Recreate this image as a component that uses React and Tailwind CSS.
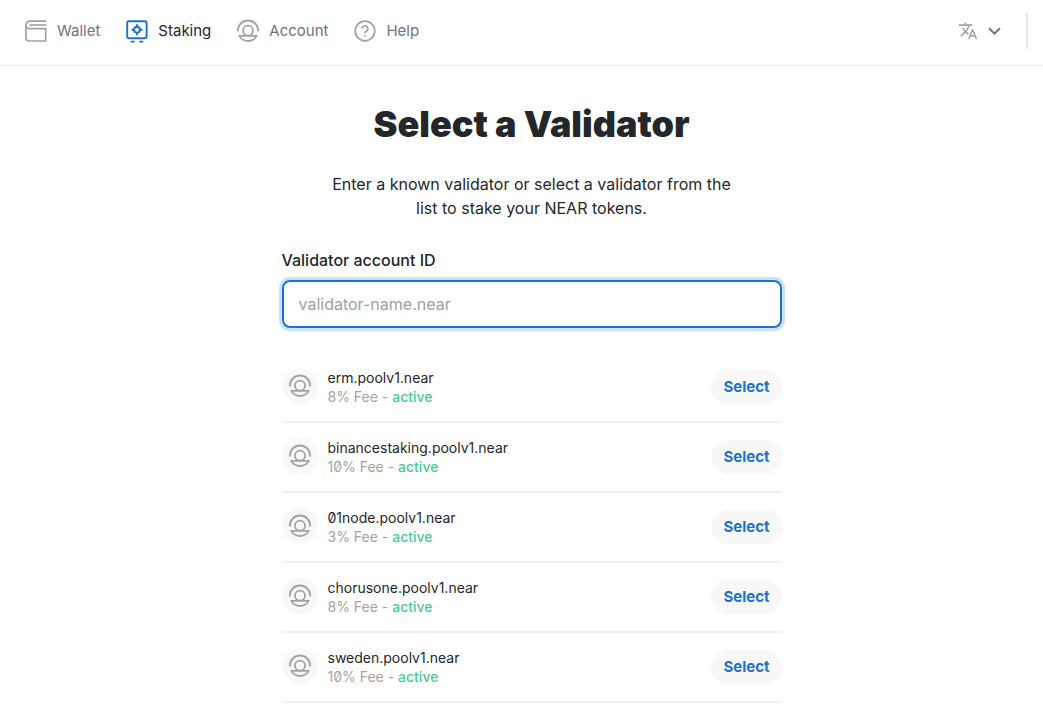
import React, { useState } from "react";
import { MdTranslate } from "react-icons/md";

const validators = [
  { name: "erm.poolv1.near", fee: 8 },
  { name: "binancestaking.poolv1.near", fee: 10 },
  { name: "01node.poolv1.near", fee: 3 },
  { name: "chorusone.poolv1.near", fee: 8 },
  { name: "sweden.poolv1.near", fee: 10 },
];

function WalletIcon() {
  return (
    <svg width="24" height="24" viewBox="0 0 24 24" fill="none" stroke="#A2A2A8" strokeWidth="1.7" aria-hidden="true">
      <path d="M22.5 2.2H5.7a3.8 3.8 0 0 0-3.8 3.8v13a3 3 0 0 0 3 3h16.8V9.7H5.7A3.8 3.8 0 0 1 1.9 6" />
      <path d="M22.5 6H5.5" />
    </svg>
  );
}

function StakingIcon() {
  return (
    <svg width="24" height="24" viewBox="0 0 24 24" fill="none" stroke="#1B72D0" strokeWidth="1.9" aria-hidden="true">
      <rect x="2.2" y="2.2" width="19.4" height="17" rx="1.6" />
      <path d="M5.7 22.6h4M14.3 22.6h4" />
      <circle cx="12" cy="10.7" r="2.9" />
      <path d="M12 5.2v2.6M12 13.6v2.6M6.5 10.7h2.6M14.9 10.7h2.6" />
    </svg>
  );
}

function AccountIcon() {
  return (
    <svg width="24" height="24" viewBox="0 0 24 24" fill="none" stroke="#A2A2A8" strokeWidth="1.8" strokeLinejoin="round" aria-hidden="true">
      <path d="M1.8 12.6v-.9a10.2 10.2 0 0 1 20.4 0v.9" />
      <circle cx="12" cy="11.7" r="5" />
      <path d="M3.2 16.9h17.6A10.4 10.4 0 0 1 12 22a10.4 10.4 0 0 1-8.8-5.1Z" />
    </svg>
  );
}

function HelpIcon() {
  return (
    <svg width="24" height="24" viewBox="0 0 24 24" fill="none" stroke="#A2A2A8" strokeWidth="1.7" aria-hidden="true">
      <circle cx="12" cy="12" r="9.8" />
      <path d="M9.2 9.8a2.8 2.8 0 1 1 4.1 2.4c-.9.5-1.3.9-1.3 2" />
      <path d="M12 16v1.6" />
    </svg>
  );
}

const links = [
  { label: "Wallet", Icon: WalletIcon },
  { label: "Staking", Icon: StakingIcon, active: true },
  { label: "Account", Icon: AccountIcon },
  { label: "Help", Icon: HelpIcon },
];

function Header() {
  return (
    <header className="flex items-center justify-between border-b border-[#ececec] pt-[13px] pr-[15px] pb-4 pl-6">
      <nav className="flex items-center gap-[25px]">
        {links.map(({ label, Icon, active }) => (
          <a key={label} href="#" className={`flex items-center gap-[9px] text-[15px] ${active ? "text-[#24272a]" : "text-[#72727a]"}`}>
            <Icon />
            {label}
          </a>
        ))}
      </nav>
      <div className="flex items-center border-r-2 border-[#e6e6e6] pr-6">
        <button type="button" aria-label="Language" className="flex h-9 items-center gap-2">
          <MdTranslate size={20} className="text-[#a2a2a8]" />
          <svg width="16" height="16" viewBox="0 0 16 16" fill="none" stroke="#72727a" strokeWidth="2" aria-hidden="true">
            <path d="M3 5.2l5.5 5.4L14 5.2" />
          </svg>
        </button>
      </div>
    </header>
  );
}

function ValidatorRow({ name, fee, onSelect }) {
  return (
    <li className="flex items-center border-b-2 border-[#f1f1f1] py-[15px]">
      <div className="mr-[10px] flex h-9 w-9 items-center justify-center self-start rounded-full bg-[#f8f8f8]">
        <AccountIcon />
      </div>
      <div className="flex-1 text-[14px] leading-[19px]">
        <div className="text-[#24272a]">{name}</div>
        <div className="text-[#a7a29e]">
          {fee}% Fee - <span className="font-medium text-[#4ec898]">active</span>
        </div>
      </div>
      <button
        type="button"
        onClick={() => onSelect(name)}
        className="h-[34px] rounded-full bg-[#f8f8f8] px-3 text-[15px] font-bold text-[#1b72d0]"
      >
        Select
      </button>
    </li>
  );
}

function App() {
  const [accountId, setAccountId] = useState("");

  return (
    <div className="min-h-screen bg-white font-['Inter',sans-serif] text-[#24272a] slashed-zero">
      <Header />
      <main className="pl-5">
        <div className="mx-auto max-w-[500px]">
          <h1 className="pt-8 text-center text-4xl leading-[52px] font-black">Select a Validator</h1>
          <p className="mx-auto mt-[22px] max-w-[420px] text-center text-base">
            Enter a known validator or select a validator from the list to stake your NEAR tokens.
          </p>
          <label htmlFor="validator" className="mt-7 block text-base font-medium">
            Validator account ID
          </label>
          <input
            id="validator"
            type="text"
            value={accountId}
            onChange={(e) => setAccountId(e.target.value)}
            placeholder="validator-name.near"
            className="mt-2 h-12 w-full rounded-lg border-2 border-[#1b72d0] px-[15px] text-base ring-3 ring-[#c8e3fc] outline-none placeholder:text-[#a0a0a0]"
          />
          <ul className="mt-[25px]">
            {validators.map((v) => (
              <ValidatorRow key={v.name} {...v} onSelect={setAccountId} />
            ))}
          </ul>
        </div>
      </main>
    </div>
  );
}

export default App;
